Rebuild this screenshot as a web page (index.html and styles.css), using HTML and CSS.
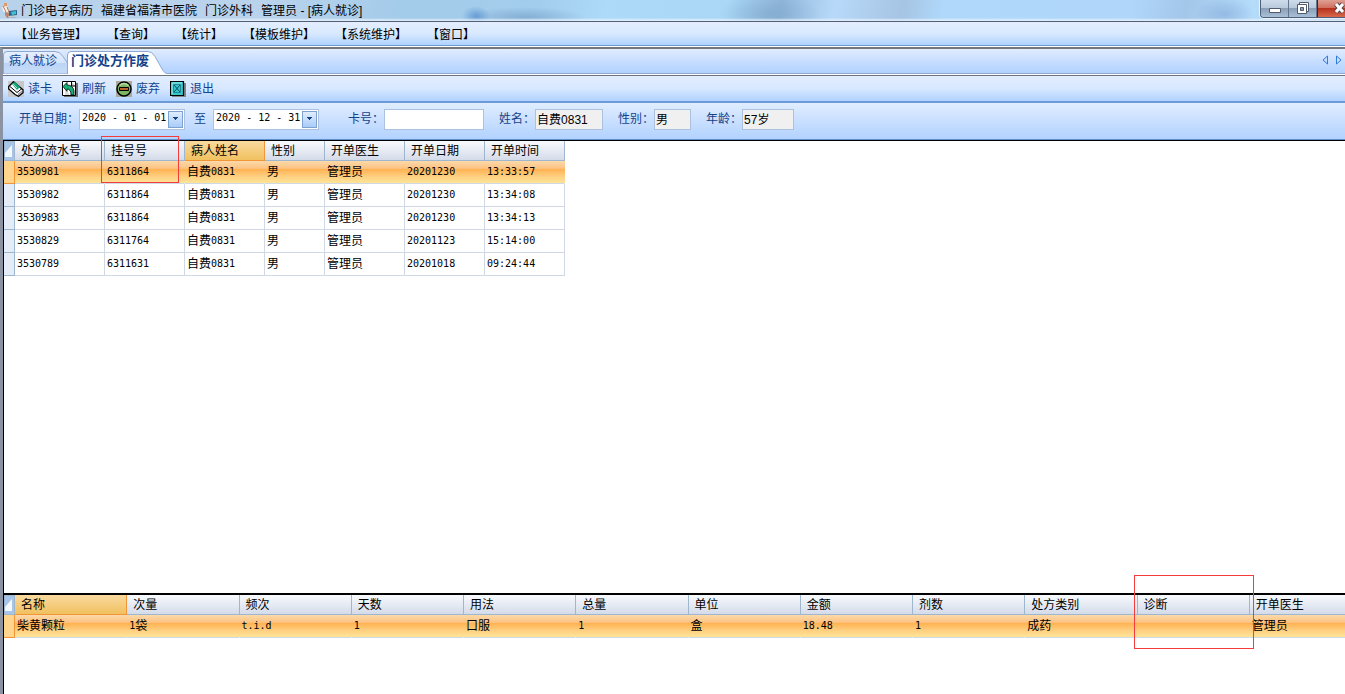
FILE: index.html
```html
<!DOCTYPE html>
<html lang="zh-CN">
<head>
    <meta charset="UTF-8">
    <title>门诊电子病历</title>
    <link rel="stylesheet" href="styles.css">
</head>
<body>
    <header class="titlebar">
        <svg class="app-icon" width="16" height="16" viewBox="0 0 16 16">
            <path d="M2 0h3v4H2z" fill="#e09a68"/>
            <path d="M0 4l5-1 2 5-3 2-3-2z" fill="#f7f3ec"/>
            <path d="M1 3l3 6M5 4l2 5" stroke="#b5764f" fill="none"/>
            <path d="M3 9l5 1v5H5l-2-3z" fill="#b98770"/>
            <path d="M7 8l8-1v7l-8 1z" fill="#2a6792"/>
            <path d="M9 9l5-1v3l-4 1z" fill="#45c0d0"/>
            <path d="M6 13l9-1v2l-8 1z" fill="#c4ccd3"/>
        </svg>
        <h1 class="title"><span>门诊电子病历</span><span>福建省福清市医院</span><span>门诊外科</span><span>管理员 - [病人就诊]</span></h1>
        <div class="window-buttons">
            <button class="win-btn" aria-label="最小化">
                <svg width="14" height="14" viewBox="0 0 14 14"><path d="M1.500 8.500h11v4h-11z" fill="#fff" stroke="#515b6b"/></svg>
            </button>
            <button class="win-btn" aria-label="还原">
                <svg width="14" height="14" viewBox="0 0 14 14"><path d="M3.500 2.500h9v9h-9z" fill="#fff" stroke="#515b6b"/><path d="M1.500 4.500h9v9h-9z" fill="#fff" stroke="#515b6b"/><path d="M4.500 7.500h3v3h-3z" fill="#8d9fb5" stroke="#515b6b"/></svg>
            </button>
            <button class="win-btn win-close" aria-label="关闭">
                <svg width="14" height="14" viewBox="0 0 14 14"><path d="M3 4l7 8M10 4l-7 8" stroke="#5a4650" stroke-width="5"/><path d="M3 4l7 8M10 4l-7 8" stroke="#fff" stroke-width="3"/></svg>
            </button>
        </div>
    </header>

    <nav class="menubar">
        <button>【业务管理】</button>
        <button>【查询】</button>
        <button>【统计】</button>
        <button>【模板维护】</button>
        <button>【系统维护】</button>
        <button>【窗口】</button>
    </nav>

    <main class="workspace">
        <div class="tabs">
            <button class="tab">
                <svg class="tab-shape" width="66" height="23" viewBox="0 0 66 23">
                    <defs><linearGradient id="tabFill" x2="0" y2="1"><stop offset="0" stop-color="#e6efff"/><stop offset="0.500" stop-color="#d5e4fb"/><stop offset="0.500" stop-color="#bcd4f5"/><stop offset="1" stop-color="#c6dcfa"/></linearGradient></defs>
                    <path d="M0.500 23V4q0-3.500 3.500-3.500h48q5 0 8 5l6 9V23z" fill="url(#tabFill)" stroke="#8ea9d0"/>
                </svg>
                <span>病人就诊</span>
            </button>
            <button class="tab active">
                <svg class="tab-shape" width="100" height="23" viewBox="0 0 100 23">
                    <path d="M0.500 23V4q0-3.500 3.500-3.500h77q4 0 7 5l8 14q2 3 4 3V23z" fill="#fff"/>
                    <path d="M0.500 23V4q0-3.500 3.500-3.500h77q4 0 7 5l8 14q2 3 4 3" fill="none" stroke="#8ea9d0"/>
                </svg>
                <span>门诊处方作废</span>
            </button>
            <div class="tab-scroll">
                <button aria-label="向左"><svg width="6" height="10" viewBox="0 0 6 10"><path d="M5.500 1v8L1 5z" fill="none" stroke="#2f7bd8"/></svg></button>
                <button aria-label="向右"><svg width="6" height="10" viewBox="0 0 6 10"><path d="M0.500 1v8L5 5z" fill="none" stroke="#2f7bd8"/></svg></button>
            </div>
        </div>

        <div class="toolbar">
            <button>
                <svg width="16" height="16" viewBox="0 0 16 16"><path d="M0 0h16v16H0z" fill="#c8c8c8"/><path d="M0.700 5.500L5.500 0.700l9.500 8v3L10.500 15.300 7 13.500 0.700 8z" fill="#fff" stroke="#000" stroke-width="1.300"/><path d="M4 3l3-2 5 5-3 3z" fill="#12a67c"/><path d="M2 5.500l7 6 5-4" fill="none" stroke="#000"/><path d="M5 3l4 4" stroke="#9fe0c8"/><path d="M10 12.500v2l4-3v-2z" fill="#999"/></svg>
                读卡
            </button>
            <button>
                <svg width="16" height="16" viewBox="0 0 16 16"><path d="M2 2h14v14H2z" fill="#6f6f6f"/><path d="M0.500 0.500h13v14h-13z" fill="#fff" stroke="#000"/><path d="M9.500 1v4h4" fill="#c6c6c6" stroke="#000"/><path d="M1 5.500l4-4V4q6 0 7 6v4H9q0-6-4-6v2.500z" fill="#16b077" stroke="#000" stroke-width="0.800"/><path d="M3 11h3M3 13h4" stroke="#bbb"/></svg>
                刷新
            </button>
            <button>
                <svg width="16" height="16" viewBox="0 0 16 16"><path d="M0 0h16v16H0z" fill="#aaa99c"/><circle cx="8" cy="8" r="7" fill="#7cb464" stroke="#000" stroke-width="1.500"/><path d="M3.500 4.500q4.500-4 9 0" fill="none" stroke="#b9dba6" stroke-width="1.500"/><path d="M3.500 6.500h9v3h-9z" fill="#b9622f" stroke="#000"/></svg>
                废弃
            </button>
            <button>
                <svg width="16" height="16" viewBox="0 0 16 16"><path d="M2 2h14v14H2z" fill="#858585"/><path d="M0.500 0.500h13v14h-13z" fill="#38c6cb" stroke="#000" stroke-width="1.200"/><path d="M2 13V2h10" fill="none" stroke="#9deaec"/><path d="M3.500 3.500h7v8h-7z" fill="none" stroke="#1c8b97"/><path d="M4 4l6 7M10 4l-6 7" stroke="#064e66"/></svg>
                退出
            </button>
        </div>

        <form class="filters">
            <div class="field">
                <label for="dateFrom">开单日期：</label>
                <div class="date-box">
                    <input type="text" id="dateFrom" value="2020 - 01 - 01">
                    <button type="button" aria-label="选择开始日期"><svg width="7" height="4" viewBox="0 0 7 4"><path d="M1 0h5v1H5v1H4v1H3V2H2V1H1z" fill="#15428b"/></svg></button>
                </div>
                <label for="dateTo" class="to">至</label>
                <div class="date-box">
                    <input type="text" id="dateTo" value="2020 - 12 - 31">
                    <button type="button" aria-label="选择结束日期"><svg width="7" height="4" viewBox="0 0 7 4"><path d="M1 0h5v1H5v1H4v1H3V2H2V1H1z" fill="#15428b"/></svg></button>
                </div>
            </div>
            <div class="field card-field">
                <label for="cardNo">卡号：</label>
                <input type="text" id="cardNo" class="box card-no">
            </div>
            <div class="field">
                <label for="name">姓名：</label>
                <input type="text" id="name" class="box name" value="自费0831" readonly>
            </div>
            <div class="field">
                <label for="sex">性别：</label>
                <input type="text" id="sex" class="box sex" value="男" readonly>
            </div>
            <div class="field">
                <label for="age">年龄：</label>
                <input type="text" id="age" class="box age" value="57岁" readonly>
            </div>
        </form>

        <section class="orders">
            <table class="grid orders-grid">
                <colgroup>
                    <col class="col-mark"><col class="col-id"><col><col><col class="col-sex"><col><col><col>
                </colgroup>
                <thead>
                    <tr><th class="corner"><svg width="8" height="12" viewBox="0 0 8 12"><path d="M7 0v12H0V8z" fill="#f4f8ff"/></svg></th><th>处方流水号</th><th>挂号号</th><th class="sorted">病人姓名</th><th>性别</th><th>开单医生</th><th>开单日期</th><th>开单时间</th></tr>
                </thead>
                <tbody>
                    <tr class="selected"><td class="mark"></td><td class="num">3530981</td><td class="num">6311864</td><td>自费<span class="num">0831</span></td><td>男</td><td>管理员</td><td class="num">20201230</td><td class="num">13:33:57</td></tr>
                    <tr><td class="mark"></td><td class="num">3530982</td><td class="num">6311864</td><td>自费<span class="num">0831</span></td><td>男</td><td>管理员</td><td class="num">20201230</td><td class="num">13:34:08</td></tr>
                    <tr><td class="mark"></td><td class="num">3530983</td><td class="num">6311864</td><td>自费<span class="num">0831</span></td><td>男</td><td>管理员</td><td class="num">20201230</td><td class="num">13:34:13</td></tr>
                    <tr><td class="mark"></td><td class="num">3530829</td><td class="num">6311764</td><td>自费<span class="num">0831</span></td><td>男</td><td>管理员</td><td class="num">20201123</td><td class="num">15:14:00</td></tr>
                    <tr><td class="mark"></td><td class="num">3530789</td><td class="num">6311631</td><td>自费<span class="num">0831</span></td><td>男</td><td>管理员</td><td class="num">20201018</td><td class="num">09:24:44</td></tr>
                </tbody>
            </table>
            <div class="callout callout-reg"></div>
        </section>

        <section class="details">
            <div class="details-scroll">
                <table class="grid details-grid">
                    <colgroup>
                        <col class="col-mark"><col><col><col><col><col><col><col><col><col><col><col><col>
                    </colgroup>
                    <thead>
                        <tr><th class="corner"><svg width="8" height="12" viewBox="0 0 8 12"><path d="M7 0v12H0V8z" fill="#f4f8ff"/></svg></th><th class="sorted">名称</th><th>次量</th><th>频次</th><th>天数</th><th>用法</th><th>总量</th><th>单位</th><th>金额</th><th>剂数</th><th>处方类别</th><th>诊断</th><th>开单医生</th></tr>
                    </thead>
                    <tbody>
                        <tr class="selected"><td class="mark"></td><td>柴黄颗粒</td><td><span class="num">1</span>袋</td><td class="num">t.i.d</td><td class="num">1</td><td>口服</td><td class="num">1</td><td>盒</td><td class="num">18.48</td><td class="num">1</td><td>成药</td><td></td><td>管理员</td></tr>
                    </tbody>
                </table>
            </div>
            <div class="callout callout-diag"></div>
        </section>
    </main>
</body>
</html>
```

FILE: styles.css
```css
* {
    box-sizing: border-box;
}
body {
    margin: 0;
    height: 100vh;
    display: flex;
    flex-direction: column;
    overflow: hidden;
    font-family: "Liberation Sans", "Noto Sans CJK SC", sans-serif;
    font-size: 12px;
    line-height: 16px;
    color: #000;
    background: #fff;
}
button, input {
    font: inherit;
    color: inherit;
    margin: 0;
    padding: 0;
    border: none;
    background: none;
}
svg {
    display: block;
    flex: none;
}

/* title bar */
.titlebar {
    display: flex;
    align-items: center;
    height: 22px;
    padding-left: 2px;
    border-bottom: 1px solid #4f6078;
    background:
        linear-gradient(transparent 18px, rgba(240, 246, 252, 0.7) 20px),
        radial-gradient(ellipse 14px 10px at 476px 16px, rgba(70, 130, 200, 0.6), transparent),
        radial-gradient(ellipse 60px 10px at 525px 17px, rgba(90, 130, 180, 0.4), transparent),
        radial-gradient(ellipse 50px 20px at 770px 14px, rgba(110, 150, 190, 0.4), transparent),
        radial-gradient(ellipse 30px 16px at 1225px 14px, rgba(110, 150, 205, 0.4), transparent),
        linear-gradient(100deg, #b8d2ec 0%, #b9d3ec 20%, #a3cbea 30%, #a3cdec 40%, #addaf9 45%, #aad7f6 54%, #92b9dc 58%, #b8d9f9 62%, #a6c4e3 67%, #afd8fa 70%, #b0d7fa 84%, #a3c6e9 88%, #b5dcfa 93%, #9ec3e8 100%);
}
.title {
    display: flex;
    gap: 8px;
    margin: 0 auto 0 3px;
    font-size: 12px;
    font-weight: normal;
    white-space: nowrap;
}
.window-buttons {
    display: flex;
    align-self: flex-start;
    width: 85px;
    height: 18px;
    overflow: hidden;
    border: 1px solid #4f6078;
    border-width: 0 0 1px 1px;
    border-radius: 0 0 0 4px;
    box-shadow: 0 0 1px 1px rgba(255, 255, 255, 0.7);
}
.win-btn {
    display: flex;
    justify-content: center;
    flex: none;
    width: 28px;
    height: 17px;
    border-right: 1px solid #64758c;
    background: linear-gradient(#cfdcea 0%, #b9cadd 45%, #8b9fb8 50%, #a9bfd8 100%);
}
.win-close {
    width: 46px;
    border-left: 1px solid #5a1a18;
    background: linear-gradient(#e0a093 0%, #d0705f 45%, #b8321f 50%, #d8694a 100%);
}

/* menu */
.menubar {
    display: flex;
    align-items: center;
    gap: 20px;
    height: 24px;
    padding: 2px 0 0 15px;
    border-bottom: 1px solid #6f9ad0;
    background: linear-gradient(#e4eeff, #d8e9ff 50%, #b0d2ff);
}

.workspace {
    flex: 1;
    min-height: 0;
    display: flex;
    flex-direction: column;
    margin-top: 1px;
    border-top: 2px solid #77777a;
    border-left: 3px solid #8b93a3;
}

/* tabs */
.tabs {
    display: flex;
    height: 25px;
    padding-top: 2px;
    border-bottom: 1px solid #8ea9d0;
    background: linear-gradient(#e0ecff, #c3dbff 60%, #b2d2ff);
    color: #15428b;
}
.tab {
    position: relative;
    display: flex;
    width: 64px;
    height: 23px;
    padding: 2px 0 0 6px;
}
.tab.active {
    width: 100px;
    padding-left: 4px;
    font-size: 13px;
    font-weight: bold;
}
.tab-shape {
    position: absolute;
    left: 0;
    top: 0;
}
.tab span {
    position: relative;
    white-space: nowrap;
}
.tab-scroll {
    display: flex;
    align-items: center;
    gap: 8px;
    margin-left: auto;
    padding: 0 3px 4px 0;
}

/* toolbar */
.toolbar {
    display: flex;
    align-items: center;
    gap: 10px;
    height: 28px;
    padding-left: 5px;
    margin-top: 1px;
    border-top: 1px solid #6d7480;
    border-bottom: 2px solid #6b9ad6;
    background: linear-gradient(#e2edff, #d8e8ff 50%, #b0d2ff);
    color: #15428b;
}
.toolbar button {
    display: flex;
    align-items: center;
    gap: 4px;
}

/* patient filter */
.filters {
    display: flex;
    align-items: center;
    gap: 15px;
    height: 37px;
    padding: 0 0 4px 16px;
    border-bottom: 1px solid #5f8fd0;
    background: linear-gradient(#e0edff, #b2d2ff);
    color: #15428b;
}
.field {
    display: flex;
    align-items: center;
}
.card-field {
    margin-left: 14px;
}
.to {
    padding: 0 7px 0 9px;
}
.date-box {
    display: flex;
    width: 106px;
    height: 21px;
    padding: 1px;
    border: 1px solid #abc1de;
    background: #fff;
}
.date-box input {
    flex: 1;
    min-width: 0;
    padding: 0 0 2px 1px;
    font-family: "DejaVu Sans Mono", monospace;
    font-size: 10px;
    color: #000;
}
.date-box button {
    display: flex;
    align-items: center;
    justify-content: center;
    width: 15px;
    border: 1px solid #7da2d1;
    background: linear-gradient(#e0edff, #a9ccf8);
}
.box {
    height: 21px;
    padding: 0 2px 2px;
    border: 1px solid #abc1de;
    background: #fff;
    color: #000;
}
.box:read-only {
    padding-left: 1px;
    background: #f0f0f0;
}
.card-no {
    width: 100px;
}
.name {
    width: 68px;
}
.sex {
    width: 37px;
}
.age {
    width: 52px;
}

/* grids */
.grid {
    table-layout: fixed;
    border-collapse: separate;
    border-spacing: 0;
}
.grid th {
    height: 20px;
    padding: 1px 0 0 6px;
    border-right: 1px solid #9eb6ce;
    border-bottom: 1px solid #9eb6ce;
    background: linear-gradient(#f8fafd, #d4dbe9);
    font-weight: normal;
    text-align: left;
    white-space: nowrap;
}
.grid td {
    height: 23px;
    padding: 0 0 0 2px;
    border-right: 1px solid #d0d7e5;
    border-bottom: 1px solid #d0d7e5;
    white-space: nowrap;
}
.grid th.sorted {
    border-color: #f29536;
    background: linear-gradient(#f9d99f, #f1c15f);
}
.grid th.corner {
    padding: 0;
    border: 1px solid #9eb6ce;
    background: #a9c4e9;
}
.grid td.mark {
    border-right-color: #9eb6ce;
    border-bottom-color: #9eb6ce;
    background: #e4ecf7;
}
.selected td {
    border-right-color: transparent;
    background: linear-gradient(#fcd9aa 0%, #fdc383 32%, #ffb252 36%, #fed081 68%, #ffe79a 100%) border-box;
}
.grid .selected td {
    border-right-color: transparent;
}
.grid .selected td.mark {
    border-color: #f29536;
    background: #ffd58d;
}
.num {
    font-family: "DejaVu Sans Mono", monospace;
    font-size: 10px;
}
span.num {
    line-height: 1;
    vertical-align: 1px;
}
.col-mark {
    width: 11px;
}
.orders {
    position: relative;
    flex: 1;
    border-top: 1px solid #000;
    border-left: 1px solid #000;
}
.orders-grid {
    width: 561px;
}
.col-id {
    width: 90px;
}
.col-sex {
    width: 60px;
}
.details {
    position: relative;
    height: 101px;
    border-top: 2px solid #000;
    border-left: 1px solid #000;
}
.details-scroll {
    overflow: hidden;
}
.details-grid {
    width: calc(100% + 17px);
}

/* red marks over the grids */
.callout {
    position: absolute;
    border: 1px solid #f53c3c;
}
.callout-reg {
    left: 97px;
    top: -5px;
    width: 78px;
    height: 47px;
}
.callout-diag {
    right: 91px;
    top: -20px;
    width: 120px;
    height: 74px;
}
```
